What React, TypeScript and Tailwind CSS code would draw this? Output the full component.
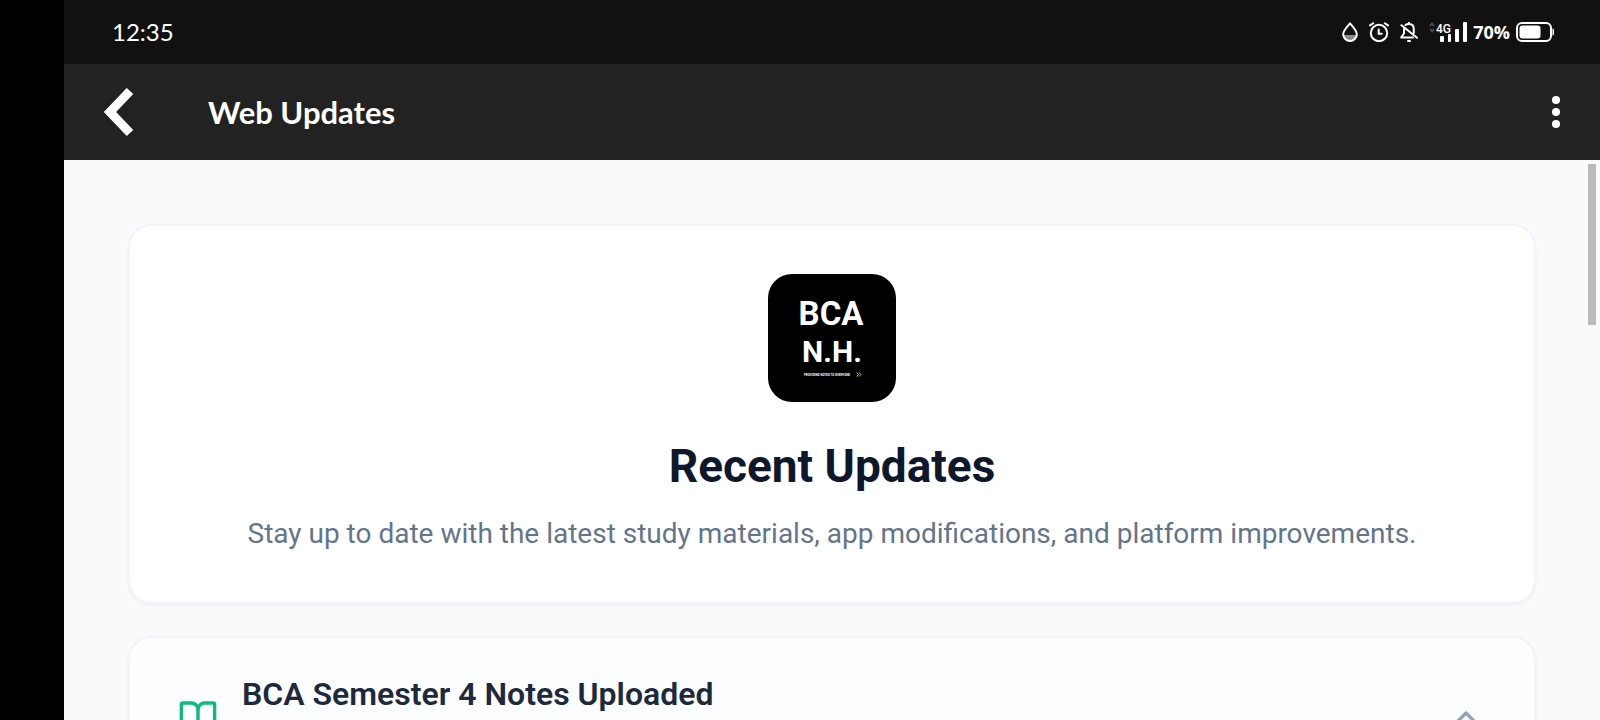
import { BookOpen, ChevronUp } from 'lucide-react';

function DropIcon() {
  return (
    <svg width="16" height="20" viewBox="0 0 16 20" aria-hidden="true">
      <path d="M1.5 13h13a6.5 6.5 0 0 1-13 0z" fill="#8b8b8b" />
      <path
        d="M8 1.4C5.6 4.2 1.2 8.6 1.2 12.2a6.8 6.8 0 0 0 13.6 0C14.8 8.6 10.4 4.2 8 1.4z"
        fill="none"
        stroke="#fff"
        strokeWidth="2"
        strokeLinejoin="round"
      />
    </svg>
  );
}

function AlarmIcon() {
  return (
    <svg
      width="20"
      height="20"
      viewBox="0 0 20 20"
      fill="none"
      stroke="#fff"
      strokeWidth="2"
      strokeLinecap="round"
      aria-hidden="true"
    >
      <circle cx="10" cy="11" r="8.2" />
      <path d="M9.7 7.5v4.3h3M1 3.4 4.2 1.2M19 3.400 15.800 1.200" />
    </svg>
  );
}

function BellOffIcon() {
  return (
    <svg
      width="18"
      height="20"
      viewBox="0 0 18 20"
      fill="none"
      stroke="#fff"
      strokeWidth="2"
      strokeLinecap="round"
      strokeLinejoin="round"
      aria-hidden="true"
    >
      <path d="M1.5 3.2 17 15.800" />
      <path d="M5.500 3C6.500 2.200 7.500 2 9 2c3.200 0 4.800 2.300 4.800 5v4" />
      <path d="M4 7v4.500L1.200 15.500H13" />
      <path d="M9 .8v1M8 19h2" />
    </svg>
  );
}

function SignalIcon() {
  return (
    <svg width="38" height="20" viewBox="0 0 38 20" aria-hidden="true">
      <path d="M1 4l2-2.500L5 4M1 7l2 2.500L5 7" fill="none" stroke="#555" strokeWidth="1.5" />
      <text x="7" y="11" fill="#fff" fontSize="12" fontWeight="500" fontFamily="Roboto, sans-serif">
        4G
      </text>
      <g fill="#fff">
        <rect x="11" y="14" width="4" height="6" rx="1" />
        <rect x="19" y="12" width="3" height="8" rx="1" />
        <rect x="26" y="7" width="4" height="13" rx="1" />
        <rect x="34" y="0" width="4" height="20" rx="1" />
      </g>
    </svg>
  );
}

function BatteryIcon() {
  return (
    <svg width="38" height="20" viewBox="0 0 38 20" aria-hidden="true">
      <rect x="1" y="1" width="34" height="18" rx="5" fill="none" stroke="#fff" strokeWidth="2" />
      <rect x="3.5" y="3.5" width="21" height="13" rx="3" fill="#fff" />
      <path d="M36.5 6.5c1.5 0 1.5 1 1.5 3.5s0 3.500-1.500 3.500z" fill="#fff" />
    </svg>
  );
}

function AppLogo() {
  return (
    <svg
      width="128"
      height="128"
      viewBox="0 0 128 128"
      className="rounded-3xl bg-black"
      role="img"
      aria-label="BCA N.H."
    >
      <g fill="#fff" fontFamily="Roboto, sans-serif" fontWeight="700" textAnchor="middle">
        <text x="63" y="51" fontSize="33">BCA</text>
        <text x="64" y="88" fontSize="30">N.H.</text>
        <text x="59" y="102" fontSize="3">PROVIDING NOTES TO EVERYONE</text>
      </g>
      <path
        d="M88.5 98.5l2 2-2 2M91 98.5l2 2-2 2"
        fill="none"
        stroke="#c5c93c"
        strokeWidth="1"
      />
    </svg>
  );
}

function StatusBar() {
  return (
    <div className="flex h-16 shrink-0 items-center justify-between bg-[#111111] pl-12 pr-[46px] text-white">
      <time className="font-['Lato',sans-serif] text-2xl">12:35</time>
      <div className="flex items-center gap-[11px]">
        <DropIcon />
        <AlarmIcon />
        <BellOffIcon />
        <div className="flex items-center gap-1.5">
          <SignalIcon />
          <span className="font-['Open_Sans',sans-serif] text-lg font-bold">70%</span>
          <BatteryIcon />
        </div>
      </div>
    </div>
  );
}

function TopBar() {
  return (
    <header className="flex h-24 shrink-0 items-center bg-[#222222] pl-9 pr-8 text-white">
      <button type="button" aria-label="Back" className="shrink-0">
        <svg width="36" height="52" viewBox="0 0 36 52" aria-hidden="true">
          <path d="M30 5 10 26l20 21" fill="none" stroke="#fff" strokeWidth="9" />
        </svg>
      </button>
      <h1 className="ml-18 flex-1 font-['Lato',sans-serif] text-[31px] font-bold">Web Updates</h1>
      <button type="button" aria-label="More options" className="flex w-6 justify-center">
        <svg width="8" height="32" viewBox="0 0 8 32" fill="#fff" aria-hidden="true">
          <circle cx="4" cy="4" r="4" />
          <circle cx="4" cy="16" r="4" />
          <circle cx="4" cy="28" r="4" />
        </svg>
      </button>
    </header>
  );
}

export default function App() {
  return (
    <div className="flex h-screen bg-black font-['Roboto',sans-serif]">
      <div className="w-16 shrink-0" />
      <div className="flex min-w-0 flex-1 flex-col">
        <StatusBar />
        <TopBar />
        <main className="relative min-h-0 flex-1 overflow-hidden bg-[#f8fafc] p-16">
          <div className="flex flex-col gap-8">
            <section className="flex flex-col items-center rounded-3xl border-2 border-[#f1f5f9] bg-white p-12 text-center shadow-[0_2px_4px_rgba(0,0,0,0.04)]">
              <AppLogo />
              <h2 className="mt-8 text-[46px]/16 font-bold text-[#0f172a]">Recent Updates</h2>
              <p className="mt-4 text-[28px]/10 text-[#64748b]">
                Stay up to date with the latest study materials, app modifications, and platform improvements.
              </p>
            </section>

            <article className="rounded-3xl border-2 border-[#f1f5f9] bg-[#fcfdfe] shadow-[0_2px_4px_rgba(0,0,0,0.04)]">
              <button type="button" className="flex w-full items-start gap-6 px-12 py-9 text-left">
                <BookOpen size={40} className="my-6 shrink-0 text-[#10b981]" />
                <span className="flex-1 text-[32px]/10 font-semibold text-[#1e293b]">
                  BCA Semester 4 Notes Uploaded
                </span>
                <ChevronUp size={40} className="my-6 shrink-0 text-[#94a3b8]" />
              </button>
            </article>
          </div>
          <div className="absolute right-1 top-1 h-[161px] w-2 bg-[#babbbd]" />
        </main>
      </div>
    </div>
  );
}
